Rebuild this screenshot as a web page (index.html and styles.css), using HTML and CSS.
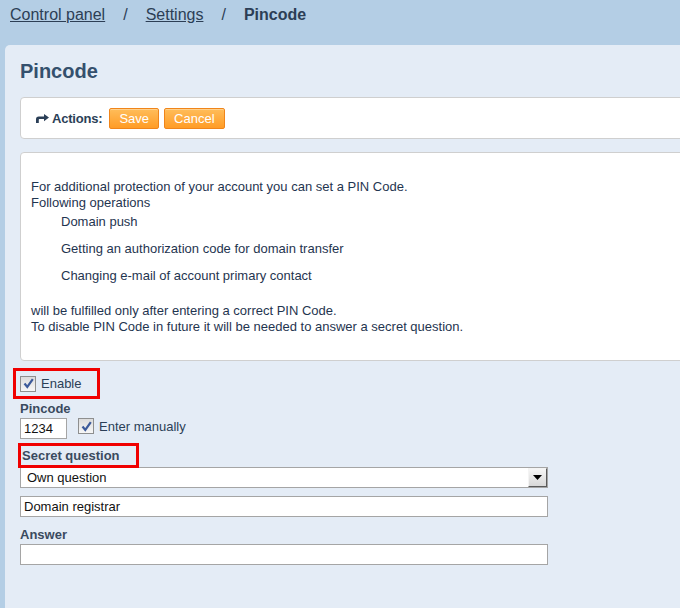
FILE: index.html
```html
<!DOCTYPE html>
<html>
<head>
  <meta charset="utf-8">
  <meta name="viewport" content="width=device-width, initial-scale=1">
  <title>Pincode</title>
  <link rel="stylesheet" href="styles.css">
</head>
<body>
  <div class="crumbs">
    <a href="#">Control panel</a><span class="sep">/</span><a href="#">Settings</a><span class="sep">/</span><b>Pincode</b>
  </div>

  <div class="panel">
    <h1>Pincode</h1>

    <div class="box actions">
      <svg class="share" width="13" height="9" viewBox="0 0 13 9"><path d="M0 9 V5.2 Q0 2.4 2.8 2.4 H8 V0 L13 3.6 L8 7.2 V5 H3.4 Q2.8 5 2.8 5.6 V9 Z" fill="#2b3f57"/></svg>
      <span class="actions-label">Actions:</span>
      <button class="btn">Save</button>
      <button class="btn">Cancel</button>
    </div>

    <div class="box info">
      <p>For additional protection of your account you can set a PIN Code.<br>Following operations</p>
      <ul>
        <li>Domain push</li>
        <li>Getting an authorization code for domain transfer</li>
        <li>Changing e-mail of account primary contact</li>
      </ul>
      <p>will be fulfilled only after entering a correct PIN Code.<br>To disable PIN Code in future it will be needed to answer a secret question.</p>
    </div>

    <div class="form">
      <div class="mark enable-row">
        <label class="check"><span class="tick"><svg width="13" height="13" viewBox="0 0 13 13"><path d="M2.5 6.5 L5.3 10 L10.8 2.2" fill="none" stroke="#3c5a9a" stroke-width="2.2"/></svg></span>Enable</label>
      </div>

      <div class="label">Pincode</div>
      <div class="pin-row">
        <input class="field pin" type="text" value="1234">
        <label class="check"><span class="tick"><svg width="13" height="13" viewBox="0 0 13 13"><path d="M2.5 6.5 L5.3 10 L10.8 2.2" fill="none" stroke="#3c5a9a" stroke-width="2.2"/></svg></span>Enter manually</label>
      </div>

      <div class="label mark question-label">Secret question</div>
      <div class="select">
        <span>Own question</span>
        <span class="drop"><svg width="9" height="5" viewBox="0 0 9 5"><path d="M0 0 H9 L4.5 5 Z" fill="#000"/></svg></span>
      </div>
      <input class="field wide question" type="text" value="Domain registrar">

      <div class="label answer-label">Answer</div>
      <input class="field wide" type="text" value="">
    </div>
  </div>
</body>
</html>
```

FILE: styles.css
```css
html, body {
  overflow: hidden;
}
body {
  margin: 0;
  background-color: #b4cee5;
  font-family: "Liberation Sans", Arial, sans-serif;
  color: #233a55;
}
.crumbs {
  height: 45px;
  box-sizing: border-box;
  padding: 5px 0 0 10px;
  font-size: 16px;
  line-height: 20px;
  color: #2c3e55;
}
.crumbs a {
  color: #2c3e55;
  text-decoration: underline;
}
.crumbs .sep {
  margin: 0 18px;
}
.panel {
  margin-left: 5px;
  min-height: 563px;
  box-sizing: border-box;
  background-color: #e4ecf6;
  border-top-left-radius: 5px;
  padding: 14px 0 30px 15px;
  overflow: hidden;
}
h1 {
  margin: 0;
  font-size: 20px;
  line-height: 24px;
  color: #34506d;
}
.box {
  background-color: white;
  border: 1px solid #cfcfcf;
  border-radius: 4px;
  margin-right: -20px;
}
.actions {
  margin-top: 14px;
  height: 40px;
  display: flex;
  align-items: center;
  padding-left: 15px;
}
.share {
  margin-right: 3px;
}
.actions-label {
  font-size: 13px;
  font-weight: bold;
  letter-spacing: -0.2px;
  color: #2b3f57;
  margin-right: 7px;
}
.btn {
  font-family: "Liberation Sans", Arial, sans-serif;
  font-size: 13px;
  color: white;
  height: 21px;
  padding: 0 9px;
  margin-right: 5px;
  border: 1px solid #f0851a;
  border-radius: 2px;
  background: linear-gradient(#ffbd5a, #ff9c26);
  box-shadow: inset 0 1px 0 rgba(255,255,255,0.3);
}
.info {
  margin-top: 13px;
  padding: 26px 10px 25px 10px;
  font-size: 13px;
  line-height: 16px;
  color: #1f3550;
}
.info p {
  margin: 0;
}
.info ul {
  list-style: none;
  margin: 3px 0 19px;
  padding-left: 30px;
}
.info li + li {
  margin-top: 11px;
}
.form {
  font-size: 13px;
  line-height: 15px;
}
.mark {
  border: 3px solid #f00000;
  box-sizing: border-box;
}
.enable-row {
  display: inline-flex;
  align-items: center;
  width: 87px;
  height: 31px;
  margin: 7px 0 0 -7px;
  padding-left: 4px;
}
.check {
  display: inline-flex;
  align-items: center;
  color: #2b3f57;
}
.tick {
  display: inline-flex;
  align-items: center;
  justify-content: center;
  width: 14px;
  height: 14px;
  border: 1px solid #8e8f8f;
  background: linear-gradient(#dcdcdc, #f7f7f7);
  margin-right: 5px;
}
.label {
  font-weight: bold;
  color: #3a4a5e;
}
.enable-row + .label {
  margin-top: 2px;
}
.pin-row {
  display: flex;
  align-items: center;
  gap: 11px;
  margin-top: 2px;
}
.field {
  font-family: "Liberation Sans", Arial, sans-serif;
  font-size: 13px;
  color: #111;
  height: 21px;
  box-sizing: border-box;
  border: 1px solid #a5a5a5;
  background: white;
  padding: 0 3px;
  margin: 0;
  display: block;
}
.pin {
  width: 47px;
}
.pin-row .check {
  margin-top: -5px;
}
.question-label {
  display: inline-block;
  margin: 4px 0 0 -2px;
  padding: 2px 16px 2px 1px;
}
.select {
  display: flex;
  align-items: center;
  justify-content: space-between;
  width: 528px;
  height: 21px;
  box-sizing: border-box;
  margin-top: -1px;
  border: 1px solid #a5a5a5;
  background: white;
  padding-left: 6px;
  color: #111;
}
.drop {
  display: flex;
  align-items: center;
  justify-content: center;
  width: 19px;
  height: 19px;
  box-sizing: border-box;
  border: 1px solid;
  border-color: #f4f4f4 #5a5a5a #5a5a5a #f4f4f4;
  background: linear-gradient(#f6f6f6, #d8d8d8);
}
.wide {
  width: 528px;
}
.question {
  margin-top: 8px;
}
.answer-label {
  margin-top: 10px;
}
.answer-label + .field {
  margin-top: 2px;
}
```
